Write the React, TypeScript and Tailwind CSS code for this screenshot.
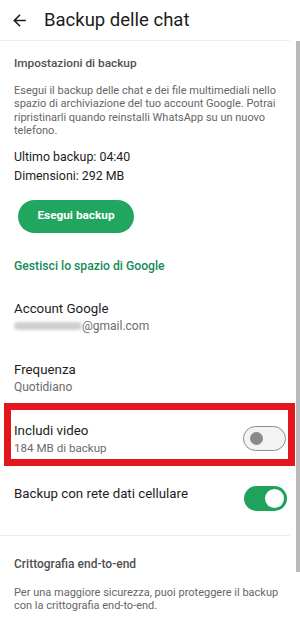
import React from "react";

// Simple Android-style switch
function Toggle({ on }: { on: boolean }) {
  if (on) {
    return (
      <div className="w-[43px] h-[25px] rounded-full bg-[#1fa35c] flex items-center justify-end pr-[3px] shrink-0">
        <div className="w-[19px] h-[19px] rounded-full bg-white" />
      </div>
    );
  }
  return (
    <div className="w-[43px] h-[25px] rounded-full bg-[#f3f3f3] border-[1.5px] border-[#8c8c8c] flex items-center pl-[6px] shrink-0">
      <div className="w-[13px] h-[13px] rounded-full bg-[#8a8a8a]" />
    </div>
  );
}

export default function App() {
  return (
    <div className="w-[300px] h-[623px] bg-white relative overflow-hidden font-['Roboto',sans-serif] text-[#1c1c1c]">
      {/* Header */}
      <div className="w-[290px] h-[41px] flex items-center border-b border-[#eeeeee]">
        <svg viewBox="0 0 24 24" className="w-[19px] h-[19px] ml-[10px] fill-[#1c1c1c]">
          <path d="M20 11H7.83l5.59-5.59L12 4l-8 8 8 8 1.41-1.41L7.83 13H20v-2z" />
        </svg>
        <div className="ml-[15px] text-[18.5px] leading-[24px]">Backup delle chat</div>
      </div>

      {/* scrollbar */}
      <div className="absolute right-0 top-[41px] w-[4px] h-[531px] bg-[#b9b9b9]" />

      <div className="w-[290px] flex flex-col">
        <div className="px-[14px]">
          <div className="mt-[14px] text-[11.8px] leading-[16px] font-medium text-[#505050]">
            Impostazioni di backup
          </div>
          <p className="mt-[13px] text-[11px] leading-[13.4px] text-[#666666]">
            Esegui il backup delle chat e dei file multimediali nello spazio di archiviazione del tuo account Google. Potrai ripristinarli quando reinstalli WhatsApp su un nuovo telefono.
          </p>
          <div className="mt-[9px] text-[12.4px] leading-[19px]">Ultimo backup: 04:40</div>
          <div className="text-[12.4px] leading-[19px]">Dimensioni: 292 MB</div>
          <button className="mt-[15px] ml-[4px] w-[116px] h-[33px] rounded-full bg-[#21a660] text-white text-[11.8px] font-bold flex items-center justify-center">
            Esegui backup
          </button>
          <div className="mt-[25px] text-[12.2px] leading-[16px] font-medium text-[#178a57]">
            Gestisci lo spazio di Google
          </div>

          <div className="mt-[26px] text-[13.3px] leading-[18px]">Account Google</div>
          <div className="text-[12px] leading-[16px] text-[#6b6b6b] flex items-center">
            <div className="w-[68px] h-[8px] rounded-full bg-[#cfcfcf] blur-[1.5px]" />
            <span>@gmail.com</span>
          </div>

          <div className="mt-[27px] text-[13.3px] leading-[18px]">Frequenza</div>
          <div className="text-[12px] leading-[16px] text-[#6b6b6b]">Quotidiano</div>
        </div>

        {/* Highlighted row */}
        <div className="mt-[8px] ml-[4px] w-[291px] border-[7px] border-[#e3151d] pl-[3px] pr-[2px] flex justify-between">
          <div className="pt-[12px] pb-[3px]">
            <div className="text-[13.3px] leading-[18px]">Includi video</div>
            <div className="text-[11.6px] leading-[16px] text-[#6b6b6b]">184 MB di backup</div>
          </div>
          <div className="mt-[16px]">
            <Toggle on={false} />
          </div>
        </div>

        <div className="mt-[19px] pl-[14px] pr-[3px] flex justify-between items-start">
          <div className="text-[13.3px] leading-[18px]">Backup con rete dati cellulare</div>
          <div className="mt-[1px]">
            <Toggle on={true} />
          </div>
        </div>

        <div className="mt-[24px] h-px bg-[#ececec]" />

        <div className="px-[14px]">
          <div className="mt-[20px] text-[12px] leading-[16px] font-medium text-[#505050]">
            Crittografia end-to-end
          </div>
          <p className="mt-[14px] mr-[-10px] text-[11px] leading-[13px] text-[#666666]">
            Per una maggiore sicurezza, puoi proteggere il backup con la crittografia end-to-end.
          </p>
        </div>
      </div>
    </div>
  );
}
